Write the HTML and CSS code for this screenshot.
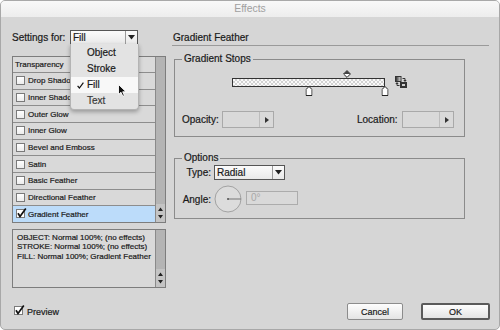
FILE: index.html
```html
<!DOCTYPE html>
<html lang="en">
<head>
  <meta charset="UTF-8">
  <title>Effects</title>
  <link rel="stylesheet" href="styles.css">
</head>
<body>
  <div class="window">
    <div class="titlebar">Effects</div>

    <div class="main">
      <div class="left">
        <div class="settings">
          <span class="settings-label">Settings for:</span>
          <div class="select select-target">
            <span class="select-value">Fill</span>
            <span class="select-btn"><svg width="7" height="5" viewBox="0 0 7 5"><path d="M0 0 H7 L3.5 4.5 Z" fill="#222"/></svg></span>
          </div>
          <ul class="menu">
            <li>Object</li>
            <li>Stroke</li>
            <li class="current">
              <svg class="tick" width="7" height="7" viewBox="0 0 7 7"><path d="M0.6 3.8 L2.4 6 L6.4 0.6" fill="none" stroke="#111" stroke-width="1.2"/></svg>
              Fill
            </li>
            <li class="muted">Text</li>
          </ul>
          <svg class="cursor" width="9" height="13" viewBox="0 0 9 13">
            <path d="M0.5 0.5 V10.5 L3 8.3 L4.8 12.3 L6.4 11.6 L4.7 7.8 H8 Z" fill="#111" stroke="#fff" stroke-width="0.9"/>
          </svg>
        </div>

        <div class="list">
          <div class="list-items">
            <div class="list-head">Transparency</div>
            <div class="list-row"><span class="box"></span>Drop Shadow</div>
            <div class="list-row"><span class="box"></span>Inner Shadow</div>
            <div class="list-row"><span class="box"></span>Outer Glow</div>
            <div class="list-row"><span class="box"></span>Inner Glow</div>
            <div class="list-row"><span class="box"></span>Bevel and Emboss</div>
            <div class="list-row"><span class="box"></span>Satin</div>
            <div class="list-row"><span class="box"></span>Basic Feather</div>
            <div class="list-row"><span class="box"></span>Directional Feather</div>
            <div class="list-row selected">
              <svg class="box-checked" width="11" height="11" viewBox="0 0 11 11"><rect x="0.5" y="1.5" width="8" height="8" fill="#fff" stroke="#7a7a7a"/><path d="M2 5.2 L4 8.4 L9.8 0.6" fill="none" stroke="#111" stroke-width="1.7"/></svg>
              Gradient Feather
            </div>
          </div>
          <div class="scrollbar">
            <div class="scroll-arrows">
              <svg width="7" height="12" viewBox="0 0 7 12"><path d="M1 4 L3.5 0.5 L6 4 Z M1 8 H6 L3.5 11.5 Z" fill="#222"/></svg>
            </div>
          </div>
        </div>

        <div class="summary">
          <div class="summary-text">
            OBJECT: Normal 100%; (no effects)<br>
            STROKE: Normal 100%; (no effects)<br>
            FILL: Normal 100%; Gradient Feather
          </div>
          <div class="scrollbar">
            <div class="scroll-arrows">
              <svg width="7" height="12" viewBox="0 0 7 12"><path d="M1 4 L3.5 0.5 L6 4 Z M1 8 H6 L3.5 11.5 Z" fill="#222"/></svg>
            </div>
          </div>
        </div>
      </div>

      <div class="right">
        <div class="panel-title">Gradient Feather</div>

        <fieldset class="group">
          <legend>Gradient Stops</legend>
          <div class="stops-row">
            <div class="slider">
              <div class="ramp"></div>
              <svg class="midpoint" style="left: 75%" width="8" height="8" viewBox="0 0 8 8"><path d="M4 0.6 L7.4 4 L4 7.4 L0.6 4 Z" fill="#fff" stroke="#222"/><path d="M4 0.6 L7.4 4 H0.6 Z" fill="#444"/></svg>
              <svg class="stop" style="left: 50%" width="7" height="10" viewBox="0 0 7 10"><path d="M3.5 0.5 L6.5 3.5 V9.5 H0.5 V3.5 Z" fill="#fff" stroke="#222"/></svg>
              <svg class="stop" style="left: 100%" width="7" height="10" viewBox="0 0 7 10"><path d="M3.5 0.5 L6.5 3.5 V9.5 H0.5 V3.5 Z" fill="#fff" stroke="#222"/></svg>
            </div>
            <svg class="swap" width="12" height="12" viewBox="0 0 12 12">
              <defs>
                <linearGradient id="sq" x1="0" x2="1" y1="0" y2="0">
                  <stop offset="0" stop-color="#222"/>
                  <stop offset="1" stop-color="#e8e8e8"/>
                </linearGradient>
              </defs>
              <rect x="0.5" y="0.5" width="5.5" height="5" fill="url(#sq)" stroke="#333"/>
              <path d="M7.5 2.5 H10 V4.5" fill="none" stroke="#333"/>
              <path d="M8.3 4 H11.7 L10 6 Z" fill="#333"/>
              <path d="M2 7.5 V9.5 H4.5" fill="none" stroke="#333"/>
              <path d="M0.3 8 H3.7 L2 6 Z" fill="#333"/>
              <rect x="5.5" y="6.5" width="6" height="5" fill="#333" stroke="#333"/>
              <rect x="7" y="8" width="3" height="2" fill="#cfcfcf"/>
            </svg>
          </div>
          <div class="field-row">
            <span class="field-label opacity-label">Opacity:</span>
            <div class="spin">
              <span class="spin-value"></span>
              <span class="spin-btn"><svg width="4" height="6" viewBox="0 0 4 6"><path d="M0 0 L4 3 L0 6 Z" fill="#333"/></svg></span>
            </div>
            <span class="field-label location-label">Location:</span>
            <div class="spin">
              <span class="spin-value"></span>
              <span class="spin-btn"><svg width="4" height="6" viewBox="0 0 4 6"><path d="M0 0 L4 3 L0 6 Z" fill="#333"/></svg></span>
            </div>
          </div>
        </fieldset>

        <fieldset class="group options">
          <legend>Options</legend>
          <div class="option-row">
            <span class="option-label">Type:</span>
            <div class="select select-type">
              <span class="select-value">Radial</span>
              <span class="select-btn"><svg width="7" height="5" viewBox="0 0 7 5"><path d="M0 0 H7 L3.5 4.5 Z" fill="#222"/></svg></span>
            </div>
          </div>
          <div class="option-row angle-row">
            <span class="option-label">Angle:</span>
            <svg class="dial" width="28" height="28" viewBox="0 0 28 28">
              <circle cx="14" cy="14" r="13" fill="#dcdcdc" stroke="#a2a2a2"/>
              <path d="M14 14 H27" stroke="#777"/>
              <circle cx="14" cy="14" r="1" fill="#555"/>
            </svg>
            <div class="angle-field">0°</div>
          </div>
        </fieldset>
      </div>
    </div>

    <div class="footer">
      <div class="preview">
        <svg class="box-checked" width="11" height="11" viewBox="0 0 11 11"><rect x="0.5" y="1.5" width="8" height="8" fill="#fff" stroke="#7a7a7a"/><path d="M2 5.2 L4 8.4 L9.8 0.6" fill="none" stroke="#111" stroke-width="1.7"/></svg>
        Preview
      </div>
      <div class="buttons">
        <button class="btn cancel-btn">Cancel</button>
        <button class="btn ok-btn">OK</button>
      </div>
    </div>
  </div>
</body>
</html>
```

FILE: styles.css
```css
* {
  box-sizing: border-box;
}

body {
  margin: 0;
  background: #fff;
  font-family: 'Liberation Sans', Arial, sans-serif;
  color: #1a1a1a;
  -webkit-text-stroke: 0.2px #1a1a1a;
}

.window {
  width: 500px;
  height: 330px;
  background: #d6d6d6;
  border: 1px solid #a8a8a8;
  border-radius: 5px;
  overflow: hidden;
}

.titlebar {
  height: 16px;
  line-height: 16px;
  text-align: center;
  font-size: 10.4px;
  color: #a0a0a0;
  -webkit-text-stroke: 0;
  background: linear-gradient(#f8f8f8, #ededed);
}

.main {
  display: flex;
  gap: 6px;
  padding: 13px 0 0 11px;
}

/* left column */

.left {
  width: 154px;
}

.settings {
  position: relative;
  display: flex;
  align-items: center;
  height: 14px;
  margin-bottom: 12px;
}

.settings-label {
  width: 58px;
  font-size: 10px;
}

.select {
  display: flex;
  height: 15px;
  border: 1px solid #555;
  background: linear-gradient(#fbfbfb, #e9e9e9);
  font-size: 10px;
}

.select-value {
  flex: 1;
  padding-left: 2px;
  line-height: 13px;
}

.select-btn {
  width: 12px;
  border-left: 1px solid #9a9a9a;
  display: flex;
  align-items: center;
  justify-content: center;
}

.select-target {
  width: 68px;
}

.menu {
  position: absolute;
  top: 14px;
  left: 58px;
  width: 69px;
  margin: 0;
  padding: 1px 0 0;
  list-style: none;
  background: #e3e3e3;
  border: 1px solid #b4b4b4;
  border-top: none;
  border-radius: 0 0 4px 4px;
  box-shadow: 0 2px 4px rgba(0, 0, 0, 0.3);
  z-index: 2;
}

.menu li {
  position: relative;
  height: 16px;
  line-height: 16px;
  padding-left: 16px;
  font-size: 10px;
}

.menu li.current {
  background: #f8f8f8;
}

.menu li.muted {
  color: #3a3a3a;
  -webkit-text-stroke-color: #3a3a3a;
}

.tick {
  position: absolute;
  left: 6px;
  top: 5px;
}

.cursor {
  position: absolute;
  left: 106px;
  top: 54px;
  z-index: 3;
}

.list {
  display: flex;
  height: 167px;
  border: 1px solid #7d7d7d;
}

.list-items {
  flex: 1;
  display: flex;
  flex-direction: column;
  border-right: 1px solid #8a8a8a;
}

.list-head {
  height: 16px;
  line-height: 15px;
  padding-left: 2px;
  font-size: 8px;
  border-bottom: 1px solid #8d8d8d;
  background: #dadada;
}

.list-row {
  flex: 1;
  display: flex;
  align-items: center;
  padding-left: 3px;
  font-size: 8px;
  background: #d9d9d9;
  border-bottom: 1px solid #8d8d8d;
}

.list-row:last-child {
  border-bottom: none;
}

.list-row.selected {
  background: #bcdcfa;
}

.box {
  width: 9px;
  height: 9px;
  margin-right: 3px;
  border: 1px solid #7a7a7a;
  background: linear-gradient(#ffffff, #ececec);
}

.box-checked {
  margin-right: 1px;
  margin-top: -2px;
}

.scrollbar {
  width: 9px;
  display: flex;
  flex-direction: column;
  justify-content: flex-end;
  background: #b4b4b4;
}

.scroll-arrows {
  height: 18px;
  display: flex;
  align-items: center;
  justify-content: center;
  background: #c4c4c4;
}

.summary {
  display: flex;
  height: 59px;
  margin-top: 6px;
  border: 1px solid #7d7d7d;
  background: #d9d9d9;
}

.summary-text {
  flex: 1;
  padding: 3px 3px 0 4px;
  font-size: 8px;
  line-height: 9.3px;
  border-right: 1px solid #8a8a8a;
}

/* right column */

.right {
  width: 317px;
}

.panel-title {
  height: 16px;
  line-height: 15px;
  padding-left: 1px;
  font-size: 10px;
  border-bottom: 1px solid #9a9a9a;
}

.group {
  width: 291px;
  margin: 7px 0 0 2px;
  padding: 0 6px 8px 7px;
  border: 1px solid #8b8b8b;
}

.group legend {
  padding: 0 2px;
  font-size: 10px;
  line-height: 12px;
}

.stops-row {
  display: flex;
  align-items: flex-start;
  margin-top: 5px;
  padding-left: 50px;
}

.slider {
  position: relative;
  width: 153px;
  height: 27px;
}

.ramp {
  height: 9px;
  margin-top: 8px;
  border: 1px solid #333;
  background-color: #fff;
  background-image: repeating-conic-gradient(#d2d2d2 0 25%, #fafafa 0 50%);
  background-size: 4px 4px;
}

.midpoint {
  position: absolute;
  top: 0;
  transform: translateX(-50%);
}

.stop {
  position: absolute;
  top: 16px;
  transform: translateX(-50%);
}

.swap {
  margin: 6px 0 0 10px;
}

.field-row {
  display: flex;
  align-items: center;
  margin-top: 14px;
}

.field-label {
  font-size: 10px;
}

.opacity-label {
  width: 40px;
}

.location-label {
  width: 45px;
  margin-left: 83px;
}

.spin {
  display: flex;
  width: 52px;
  height: 17px;
  border: 1px solid #a9a9a9;
  background: #d9d9d9;
}

.spin-value {
  flex: 1;
  border-right: 1px solid #bcbcbc;
}

.spin-btn {
  width: 13px;
  display: flex;
  align-items: center;
  justify-content: center;
}

.options {
  margin-top: 15px;
  padding-bottom: 5px;
}

.option-row {
  display: flex;
  align-items: center;
  margin-top: 1px;
}

.option-label {
  width: 29px;
  margin-right: 3px;
  text-align: right;
  font-size: 10px;
}

.select-type {
  width: 71px;
}

.angle-row {
  margin-top: 5px;
}

.dial {
  display: block;
}

.angle-field {
  width: 52px;
  height: 14px;
  margin: -3px 0 0 4px;
  padding-left: 4px;
  line-height: 12px;
  font-size: 10px;
  color: #a8a8a8;
  -webkit-text-stroke: 0;
  border: 1px solid #acacac;
  background: #d9d9d9;
}

/* footer */

.footer {
  display: flex;
  align-items: center;
  justify-content: space-between;
  height: 17px;
  margin-top: 15px;
  padding: 0 9px 0 13px;
}

.preview {
  display: flex;
  align-items: center;
  font-size: 9px;
}

.preview .box-checked {
  margin-right: 2px;
}

.buttons {
  display: flex;
  gap: 18px;
}

.btn {
  height: 17px;
  padding: 0;
  font-family: 'Liberation Sans', Arial, sans-serif;
  font-size: 9px;
  color: #1a1a1a;
  -webkit-text-stroke: 0.2px #1a1a1a;
  background: linear-gradient(#fdfdfd, #e4e4e4);
  border: 1px solid #8c8c8c;
  border-radius: 2px;
}

.cancel-btn {
  width: 56px;
}

.ok-btn {
  width: 69px;
  border: 2px solid #5a5a5a;
}
```
